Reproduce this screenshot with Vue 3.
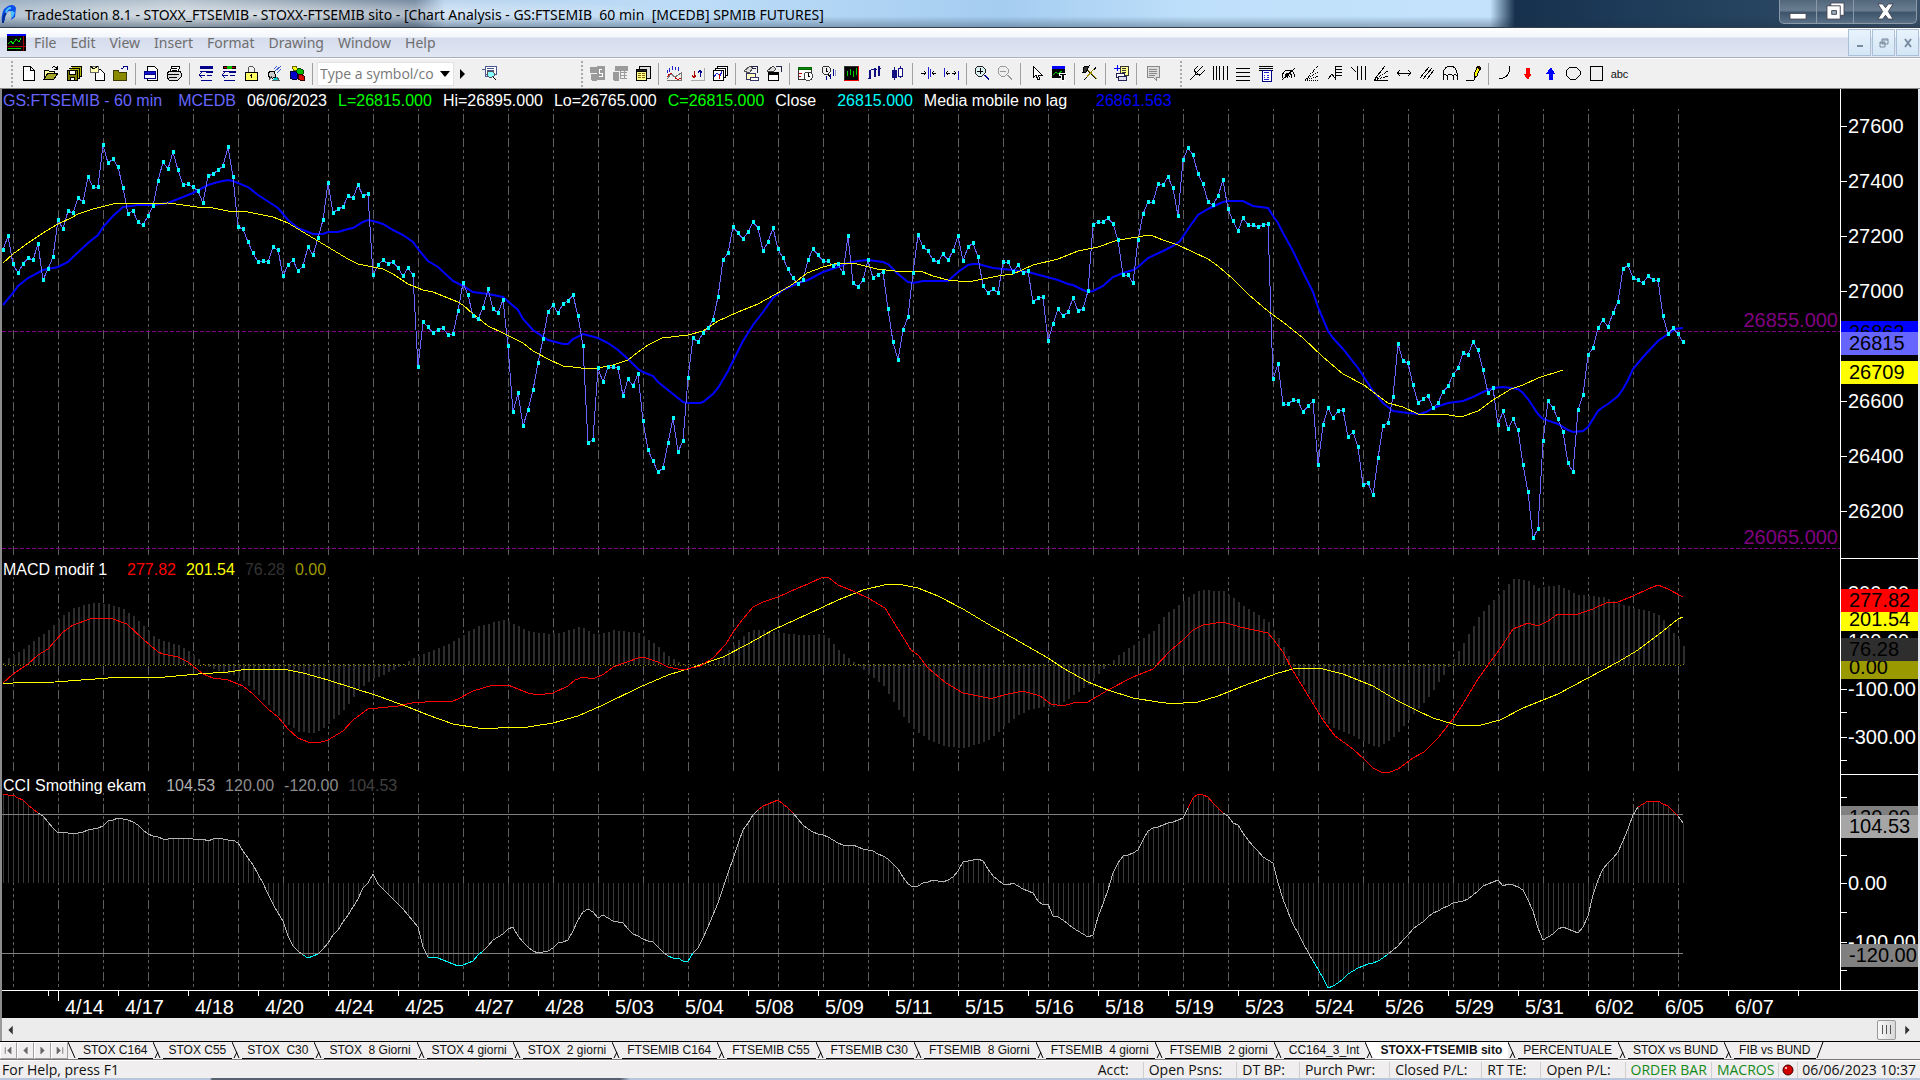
<script setup>
/* ---------- title, menu and toolbars ---------- */
const menus = ['File', 'Edit', 'View', 'Insert', 'Format', 'Drawing', 'Window', 'Help']

const K = '#000'
const N = '#00008b'
const G = '#9a9a9a'
// each icon: list of [path, fill, stroke]
const icons = {
  new: [['M3 1h7l4 4v10h-11zM10 1v4h4', '#fff', K]],
  open: [['M1 14V5h4l1 1h5v3', '#ffff9c', K], ['M1 14l4-6h10l-4 6z', '#a5a52a', K], ['M9 3q3-3 5 1M14 1v3h-3', 'none', K]],
  saveAll: [['M5 1h10v10h-2', '#b5b500', K], ['M3 3h10v10h-2', '#b5b500', K], ['M1 5h10v10h-10z', '#808000', K], ['M3 5h6v4h-6zM4 12h4v3h-4z', '#fff', K]],
  mailDoc: [['M6 4h5l4 4v7h-9z', '#fff', K], ['M1 1h8v6h-8z', '#ffffb0', '#666'], ['M1 1l4 3l4-3', 'none', K]],
  folder: [['M1 5h5l1 2h7v8h-13z', '#8a8a00', '#3a3a00'], ['M9 4l5-3M11 1h4v4', 'none', N]],
  preview: [['M4 1h7l3 3v11h-10z', '#fff', K], ['M1 6h11v7h-11z', '#fff', N], ['M1 6h11v3h-11z', '#1414c8', N]],
  print: [['M4 7l2-6h8l-2 6z', '#fff', K], ['M1 8l3-2h10l1 2v4l-3 3h-9l-2-3z', '#ddd', K], ['M1 9h12M3 12h8M6 3h5M6 5h5', 'none', K]],
  winBack: [['M3 1h12v2h-12z', N, N], ['M3 6h12M4 15h11M10 10h5M2 10h6M5 7l-3 3l3 3', 'none', N], ['M9 6h6v1h-6z', N, N]],
  winTool: [['M3 1h12v2h-12z', '#c00', K], ['M7 1h4v2h-4z', '#0b0', '#0b0'], ['M3 6h12M4 15h11M10 10h5M2 10h6M5 7l-3 3l3 3', 'none', N], ['M9 6h6v1h-6z', N, N]],
  lock: [['M5 8V3q3-4 6 0v5', 'none', '#555'], ['M2 7h12v8h-12z', '#ffff60', K], ['M8 9v4M7 10h2', 'none', K]],
  dish: [['M2 10q0-4 6-4l2 6q-5 3-8-2', '#ccc', K], ['M3 15l3-4M6 15h7l-2-3', '#0cc', '#555'], ['M9 6l6-5M11 8l4-4M8 4l3-3', 'none', '#3b5bd0']],
  blocks: [['M3 2l4-1l2 4l-4 1z', '#ff0', '#660'], ['M7 6l3-3l4 2v4l-4 2l-3-2z', '#0b0', '#040'], ['M1 7l5-1l2 2v6l-3 1l-4-2z', '#00c', '#003'], ['M9 10l3-1l3 2v4l-4 0l-2-1z', '#d00', '#300']],
  find: [['M4 1h11v8h-11z', '#fff', '#4a5a90'], ['M6 3h7M6 5h7M1 4h3v7h4', 'none', '#4a5a90'], ['M7 6h5l1 2v3l-2 1h-3l-2-2v-3z', '#8ff', '#555'], ['M12 12l3 3', 'none', K]],
  gray1: [['M1 2h6v5h-6zM8 1h7v13h-7z', G, G], ['M2 9h5v6h-4z', G, G], ['M13 4h-3v4h3v3h-3', 'none', '#fff']],
  gray2: [['M3 1h12v4h-12zM1 7h5v8h-4z', G, G], ['M8 7h7M8 10h7M8 13h7M8 5v9M12 5v9', 'none', G]],
  list: [['M4 1h11v12h-11z', '#ddd', K], ['M1 4h10v11h-10z', '#ffff90', K], ['M1 4h10v2h-10z', '#222', K], ['M3 8h3M3 10h3M3 12h3M7 8h3M7 10h3M7 12h3', 'none', '#886600']],
  curve: [['M1 5v3M3 3v4M6 1v4M9 2v3M12 2v4', 'none', '#2222cc'], ['M1 12q4-6 7-1t7 2', 'none', '#c00000'], ['M1 14l4-5l4 3l6-4M1 15h14V7', 'none', '#777']],
  updown: [['M5 6v7M3 10l2 3l2-3', 'none', '#b00000'], ['M11 12V5M9 8l2-3l2 3', 'none', N], ['M2 15h13V3', 'none', '#aaa']],
  windows: [['M5 1h10v9h-10z', '#fff', K], ['M3 3h10v9h-10z', '#fff', K], ['M1 5h10v10h-10z', '#fff', K], ['M2 12l3-4l3 3l2-5', 'none', '#2020d0'], ['M7 9v5', 'none', '#c00']],
  handWin: [['M3 8h9v6h-9z', '#ffffc0', '#336'], ['M7 12h8v3h-8z', '#fff', '#336'], ['M1 6l6-5l3 2l-4 5z', '#ddd', '#555'], ['M8 1h6v7M9 3h4', 'none', '#224']],
  handBox: [['M2 7h10v8h-10z', '#fff', K], ['M2 7h10v2h-10z', K, K], ['M1 6l6-5l3 3l-3 3z', '#ddd', '#444'], ['M10 1h5v6', 'none', '#224']],
  calendar: [['M1 3h13v11h-13z', '#fff', '#333'], ['M1 2h13v2h-13z', '#0a8a0a', '#060'], ['M2 8h3M2 11h2', 'none', '#c00'], ['M9 7h4l2 2v4l-2 2h-4l-2-2v-4z', '#fff', '#444'], ['M11 8v3h2', 'none', K]],
  clockBars: [['M4 1h4l2 2v4l-2 2h-4l-2-2v-4z', '#eee', '#333'], ['M6 3v3h2M8 9l2 3', 'none', K], ['M6 11v4M10 9v5M13 4v7', 'none', N], ['M15 5v6', 'none', '#99c']],
  blackChart: [['M1 1h14v14h-14z', K, '#333'], ['M15 1v14h-14', 'none', '#e00'], ['M4 6v5M7 4v6M10 6v6M13 3v7', 'none', '#0c0']],
  barsNavy: [['M3 5v9M2 13h2M8 3v9M8 4h-3M8 4h3M12 1v10M12 3h3', 'none', '#101080'], ['M4 5v9M9 3v9M13 1v10', 'none', '#101080']],
  candles: [['M5 2v13M11 1v12', 'none', '#101080'], ['M3 5h4v7h-4z', '#101080', '#101080'], ['M9 3h4v8h-4z', '#fff', '#101080']],
  narrow: [['M8 2v12M10 4v8', 'none', '#2020d0'], ['M1 8h5M4 6l2 2l-2 2M16 8h-4M14 6l-2 2l2 2', 'none', K]],
  widen: [['M1 3v9M15 6v9', 'none', '#2020d0'], ['M3 8h4M5 6l-2 2l2 2M9 8h4M11 6l2 2l-2 2', 'none', K]],
  zoomIn: [['M4 1h4l3 3v4l-3 3h-4l-3-3v-4z', '#d8f0f0', '#222'], ['M6 3v6M3 6h6', 'none', K], ['M10 10l5 5M11 10l4 4', 'none', N]],
  zoomOut: [['M4 1h4l3 3v4l-3 3h-4l-3-3v-4z', '#eee', G], ['M3 6h6M10 10l5 5M11 10l4 4', 'none', G]],
  pointer: [['M5 1v12l3-3l2 5l2-1l-2-4h4z', '#fff', K]],
  chartText: [['M1 1h12v11h-12z', K, K], ['M1 1h12v2h-12z', '#00f', '#00f'], ['M2 10l3-3l2 2l4-3', 'none', '#0c0'], ['M8 8h7v2h-2v5h-3v-5h-2z', K, '#fff']],
  hammer: [['M3 3l11 11', 'none', K], ['M4 3l11 11M13 3L3 14', 'none', '#a09000'], ['M2 2l5-1l-3 6h-3z', '#333', K], ['M14 2l-2 3M2 15l3-3', 'none', K]],
  addNote: [['M7 1h8v9h-8z', '#ffff90', '#333'], ['M9 3h4M9 5h4M9 7h4', 'none', '#333'], ['M4 0v6M1 3h6', 'none', '#00f'], ['M3 8h8v4h-8z', '#fff', '#225'], ['M5 11h8v4h-8z', '#dde', '#225']],
  note: [['M3 1h12v11h-3v3l-3-3h-6z', '#ddd', '#888'], ['M5 4h8M5 6h8M5 8h8M5 10h6', 'none', '#888']],
  fork: [['M1 15l6-6M7 9l-2-4M7 9l5 1M5 5l4-4M8 7l6-6M11 10l5-5M5 5l6 6', 'none', K]],
  vlines: [['M1 1v14M4 1v14M7 1v14M11 1v14M15 1v14', 'none', K]],
  hlines: [['M1 3h14M1 7h14M1 11h14M1 15h14', 'none', K]],
  calc: [['M1 1h14M1 3h14M1 5h14', 'none', K], ['M4 5h9v11h-9z', '#fff', N], ['M6 7h5M6 10h1M9 10h2M6 12h1M9 12h2M6 14h5', 'none', '#22c']],
  arcs: [['M1 13q0-8 7-8q5 1 6 7M4 13q0-5 4-5q3 1 3 5M1 15L14 3M6 13q1-4 3-1', 'none', K]],
  fanDots: [['M1 15h14M1 15L14 1', 'none', K, '1 1'], ['M1 15L15 6M1 15l14-4', 'none', K, '1 1']],
  retrace: [['M1 14l4-5l3 4V1M8 1h7M8 4h7M8 7h7M8 10h7', 'none', K]],
  timeLines: [['M1 2l5 5M7 1v14M11 1v14M15 1v14', 'none', K]],
  fan: [['M1 15L12 1M1 15h14', 'none', K], ['M1 15L15 6M1 15l14-4', 'none', K, '2 1']],
  hArrow: [['M1 8h14M4 5l-3 3l3 3M12 5l3 3l-3 3', 'none', K], ['M2 7v2M14 7v2', 'none', K]],
  channel: [['M1 13l9-11M4 14l9-11M8 14l7-9', 'none', K]],
  dome: [['M1 15V8q2-7 7-7q6 0 7 7v7M1 11q2-3 4 0q3-3 6 0q2-3 4 0M5 15v-4M11 15v-4', 'none', K]],
  pencil: [['M1 15h8l3-6', 'none', K], ['M9 10l3-8l3 1l-3 8l-3 2z', '#ff0', K], ['M12 2l1-1l2 1v2z', '#a00', K]],
  arc: [['M14 1q0 12-11 13', 'none', K]],
  down: [['M7 3h3v6h2l-3 5l-4-5h2z', '#f00', '#f00']],
  up: [['M7 14h3V8h2l-3-5l-4 5h2z', '#00f', '#00f']],
  circle: [['M5 2h6l4 4v4l-4 4h-6l-4-4v-4z', 'none', K]],
  square: [['M2 1h12v14h-12z', 'none', K]],
}
const bar1 = ['new', 'open', 'saveAll', 'mailDoc', 'folder', '|', 'preview', 'print', '|', 'winBack', 'winTool', 'lock', 'dish', 'blocks', '|']
const bar2 = ['gray1', 'gray2', 'list', '|', 'curve', 'updown', 'windows', '|', 'handWin', 'handBox', '|', 'calendar', 'clockBars', 'blackChart', 'barsNavy', 'candles', '|', 'narrow', 'widen', '|', 'zoomIn', 'zoomOut', '|', 'pointer', 'chartText', '|', 'hammer', '|', 'addNote', '|', 'note']
const bar3 = ['fork', 'vlines', 'hlines', 'calc', 'arcs', 'fanDots', 'retrace', 'timeLines', 'fan', 'hArrow', 'channel', 'dome', 'pencil', '|', 'arc', 'down', 'up', 'circle', 'square', 'abc']

/* ---------- chart data ---------- */
const COUNT = 337
const barX = i => 3 + 5 * i

// hourly closes, in thirds of a pixel below the top grid row
const closes = [
  390, 348, 432, 459, 432, 414, 420, 372, 480, 447, 411, 300, 327, 273, 279, 234, 246, 171, 201, 201,
  75, 129, 117, 141, 204, 282, 273, 306, 315, 288, 258, 183, 126, 147, 96, 150, 195, 192, 201, 213,
  249, 168, 162, 150, 138, 81, 171, 321, 327, 366, 399, 426, 423, 426, 381, 390, 468, 435, 420, 453,
  438, 381, 405, 354, 300, 189, 279, 267, 261, 228, 234, 195, 228, 222, 465, 435, 420, 432, 426, 444,
  468, 444, 465, 741, 606, 621, 639, 630, 624, 645, 642, 573, 489, 525, 588, 597, 564, 507, 567, 579,
  540, 678, 876, 819, 918, 870, 810, 729, 657, 576, 555, 579, 552, 543, 525, 588, 678, 969, 960, 744,
  786, 741, 741, 744, 828, 777, 798, 762, 903, 990, 1023, 1056, 1044, 969, 894, 996, 963, 774, 654, 666,
  639, 624, 600, 531, 420, 399, 321, 339, 357, 336, 306, 324, 393, 366, 324, 387, 414, 447, 474, 492,
  480, 420, 387, 405, 423, 423, 438, 432, 459, 348, 489, 501, 480, 420, 474, 465, 456, 567, 666, 720,
  629, 591, 459, 345, 381, 393, 420, 426, 402, 420, 393, 348, 423, 381, 369, 411, 498, 519, 507, 519,
  426, 426, 456, 435, 459, 453, 546, 534, 531, 663, 612, 567, 588, 576, 534, 573, 567, 513, 315, 306,
  306, 294, 312, 360, 465, 465, 489, 360, 282, 245, 245, 192, 195, 171, 204, 288, 120, 84, 105, 162,
  192, 246, 255, 228, 180, 267, 303, 333, 294, 315, 315, 321, 315, 312, 777, 732, 852, 852, 840, 843,
  876, 858, 843, 1035, 915, 864, 894, 873, 870, 951, 936, 981, 1095, 1089, 1125, 1014, 918, 909, 831, 672,
  723, 729, 795, 849, 837, 828, 864, 849, 816, 798, 765, 744, 699, 705, 666, 690, 750, 819, 804, 915,
  873, 927, 897, 930, 1035, 1116, 1254, 1227, 963, 843, 864, 897, 936, 1029, 1056, 870, 825, 705, 684, 624,
  600, 621, 579, 546, 447, 435, 474, 480, 489, 468, 480, 480, 588, 642, 624, 642, 666,
]
const closeY = closes.map(v => 120 + Math.round(v / 3))
const closeLine = closeY.map((y, i) => `${barX(i)},${y}`).join(' ')
const closeDots = closeY.map((y, i) => `M${barX(i) - 1} ${y - 2}h3v4h-3z`).join('')

const fastAverage = '3,305 13,293 18,286 28,278 43,270 58,267 68,262 73,257 88,243 98,235 103,227 113,216 123,207 138,205 153,205 168,203 178,199 193,193 208,185 218,182 228,180 233,181 248,187 258,195 278,208 288,220 298,228 313,234 323,234 328,232 338,232 348,229 353,228 363,222 368,220 373,221 383,224 393,230 403,235 413,242 418,249 428,261 438,267 453,281 463,286 473,292 488,294 503,297 518,310 523,319 533,330 548,340 563,344 568,344 573,339 583,334 598,338 608,343 618,350 628,359 638,369 643,372 653,376 658,382 673,394 683,402 688,403 700,403 703,402 713,394 718,388 728,371 733,361 743,341 753,325 763,312 773,298 783,290 798,283 808,280 823,272 838,267 848,263 858,261 868,260 883,262 888,264 898,274 908,282 913,283 923,281 948,281 958,272 968,265 973,264 978,264 993,268 1003,269 1013,270 1028,272 1043,276 1058,280 1068,284 1073,285 1083,290 1088,292 1093,291 1103,286 1113,277 1123,273 1133,270 1138,267 1148,258 1163,251 1173,246 1180,241 1188,229 1198,215 1208,209 1223,202 1228,201 1243,201 1253,206 1268,208 1273,216 1278,223 1283,233 1293,251 1303,272 1313,292 1318,307 1328,331 1333,338 1343,349 1358,368 1373,391 1383,403 1393,411 1408,413 1420,414 1426,412 1433,408 1448,403 1463,401 1473,397 1483,392 1493,388 1503,387 1518,389 1523,393 1528,399 1538,414 1543,419 1558,424 1568,430 1573,432 1583,431 1588,427 1593,419 1598,411 1603,407 1608,404 1618,396 1623,389 1628,380 1633,369 1643,357 1658,341 1668,334 1675,329 1683,328'
const slowAverage = '3,263 13,254 28,243 43,233 58,224 73,217 78,214 93,209 113,204 168,203 183,205 197,207 213,208 228,211 248,212 273,217 288,223 308,235 328,247 348,259 358,264 368,266 373,267 383,269 393,274 408,284 423,290 433,292 443,296 458,302 463,305 473,314 488,326 503,333 523,343 533,351 548,359 563,366 573,367 588,369 598,368 613,365 628,360 638,352 648,345 662,338 688,335 703,331 718,321 738,312 758,304 783,290 793,284 807,273 823,267 838,263 853,263 877,269 895,271 923,272 933,276 948,280 968,282 983,279 998,276 1013,274 1033,265 1058,259 1078,251 1098,247 1118,240 1138,237 1148,235 1153,236 1163,240 1178,245 1193,252 1208,259 1218,266 1233,279 1248,294 1263,307 1273,315 1283,322 1303,338 1323,357 1343,374 1364,385 1388,403 1403,407 1418,414 1433,415 1443,414 1455,416 1464,416 1478,411 1493,400 1511,389 1523,385 1538,378 1563,370'
const macdLine = '3,683 13,674 28,664 38,655 48,649 63,632 73,625 93,618 110,618 127,624 143,639 158,652 163,654 178,657 188,662 203,674 213,678 228,680 243,686 253,694 268,709 278,717 288,729 298,738 308,742 318,743 328,740 343,731 353,720 368,709 398,706 412,703 438,701 453,701 458,699 473,691 493,685 508,685 528,693 538,695 553,693 568,686 575,680 583,677 593,679 604,674 613,667 638,658 643,657 658,662 668,667 683,670 700,666 713,658 726,644 733,632 743,619 753,607 763,602 778,597 798,588 808,584 823,577 828,577 838,585 853,591 868,598 885,608 898,629 911,650 918,655 928,668 946,683 963,693 988,698 993,698 1008,694 1023,691 1040,696 1051,704 1063,706 1073,703 1088,702 1108,690 1133,677 1153,669 1171,650 1183,640 1193,630 1203,625 1223,622 1240,627 1268,633 1273,639 1283,652 1293,671 1309,697 1323,720 1335,736 1353,749 1364,759 1373,768 1381,772 1390,772 1398,769 1413,758 1424,752 1438,738 1453,719 1463,704 1478,679 1488,665 1500,649 1513,629 1528,623 1538,626 1548,621 1558,614 1578,614 1593,609 1608,602 1618,602 1633,596 1648,589 1658,585 1668,589 1683,597'
const signalLine = '3,684 13,683 55,682 108,678 118,677 165,677 198,674 228,672 248,669 283,669 303,673 328,680 353,688 378,696 408,707 428,715 453,724 478,728 498,728 528,727 553,723 578,716 603,705 640,687 668,675 691,668 723,657 748,644 773,630 808,614 838,600 863,590 888,584 898,584 918,588 938,596 963,609 993,627 1013,638 1048,658 1063,668 1088,682 1108,690 1133,698 1158,702 1173,704 1183,703 1198,702 1218,696 1243,686 1278,673 1293,669 1308,668 1323,669 1343,674 1373,686 1398,701 1418,711 1433,718 1456,725 1481,725 1500,720 1523,708 1558,694 1588,678 1618,662 1638,650 1658,635 1678,619 1683,617'
const histogram = '3,663 8,658 13,655 23,649 38,637 48,630 58,619 63,615 73,608 83,605 93,603 108,604 123,609 133,616 148,631 153,636 163,641 178,645 188,651 198,659 203,664 213,669 233,675 243,681 253,690 268,705 283,722 293,728 298,732 313,733 323,728 338,715 348,704 358,689 373,679 393,670 403,664 413,658 428,652 448,644 458,638 468,631 478,626 503,620 508,621 528,631 548,634 563,632 578,627 583,628 593,634 603,633 613,630 638,633 643,636 658,647 668,656 678,662 683,665 703,665 713,663 723,656 728,650 738,640 748,632 753,630 763,630 788,634 808,635 818,634 823,635 828,638 838,650 853,662 858,666 873,678 883,686 893,702 903,717 913,729 928,740 943,746 958,748 968,747 988,740 998,732 1003,727 1018,715 1028,710 1043,707 1053,707 1063,702 1073,695 1088,685 1093,679 1108,664 1118,655 1138,641 1153,631 1163,617 1168,612 1178,605 1188,597 1198,591 1203,590 1223,591 1233,598 1243,606 1258,615 1268,622 1278,638 1283,647 1288,656 1293,667 1303,685 1313,703 1323,720 1333,728 1353,736 1368,744 1378,747 1388,741 1398,732 1408,720 1428,697 1438,682 1448,667 1453,659 1463,643 1478,617 1488,605 1498,595 1513,579 1518,579 1528,581 1538,588 1548,586 1558,585 1578,595 1603,597 1618,603 1633,608 1648,611 1658,615 1663,620 1673,633 1678,639 1683,646'
const cci = '3,794 13,795 23,800 33,809 43,816 48,822 58,833 63,832 68,833 78,833 93,829 100,828 103,826 108,821 118,818 127,819 138,825 148,834 163,839 178,838 203,839 208,841 216,838 228,840 233,840 238,843 245,854 253,865 263,883 273,904 283,921 288,936 294,948 303,955 308,958 318,954 328,943 333,935 338,930 343,922 348,915 358,899 363,888 368,883 373,874 378,884 383,889 403,909 418,927 423,947 427,957 435,957 448,962 459,966 473,961 478,955 488,946 493,940 503,934 508,929 513,927 518,936 528,947 533,951 538,953 548,951 553,948 558,943 564,942 569,939 578,920 583,912 589,908 598,918 603,915 613,921 623,923 628,929 633,934 640,937 648,941 653,942 658,947 665,954 673,958 678,958 683,961 689,961 693,953 698,948 703,938 713,915 718,903 728,873 738,844 743,830 753,815 762,806 778,800 788,808 796,816 803,825 813,832 828,837 838,843 848,846 853,845 863,849 873,851 888,859 898,869 908,884 915,888 923,883 933,880 943,882 953,877 958,871 963,862 978,859 983,861 993,876 1003,884 1008,885 1013,883 1023,889 1033,893 1038,901 1043,905 1048,904 1053,916 1061,918 1071,927 1083,934 1089,937 1094,934 1098,917 1108,890 1113,873 1118,863 1123,856 1133,853 1138,850 1143,840 1149,829 1158,827 1183,818 1188,808 1193,798 1199,793 1208,797 1218,808 1224,814 1228,816 1233,823 1238,825 1248,840 1263,857 1273,863 1278,883 1283,899 1293,924 1309,954 1323,978 1328,988 1338,983 1348,974 1364,965 1373,963 1381,959 1388,954 1398,946 1413,929 1424,921 1433,913 1453,903 1461,902 1470,898 1483,886 1498,880 1503,886 1509,884 1518,887 1524,891 1533,911 1538,928 1543,940 1553,934 1558,929 1563,927 1573,931 1578,933 1583,927 1588,916 1593,895 1598,880 1603,869 1618,852 1623,841 1628,829 1633,815 1638,807 1648,801 1658,801 1668,806 1678,816 1683,823'

// value of a polyline at every bar
function sample(line) {
  const pts = line.split(' ').map(p => p.split(',').map(Number))
  let k = 0
  return Array.from({ length: COUNT }, (_, i) => {
    const x = barX(i)
    while (k < pts.length - 2 && pts[k + 1][0] < x) k++
    const [x0, y0] = pts[k]
    const [x1, y1] = pts[k + 1]
    return Math.round(y0 + ((y1 - y0) * (x - x0)) / (x1 - x0))
  })
}
const histBars = sample(histogram).map((y, i) => {
  const top = Math.min(y, 664)
  const h = Math.max(Math.abs(664 - y), 1)
  return `M${barX(i)} ${top}h2v${h}h-2z`
}).join('')

const cciY = sample(cci)
const cciBars = cciY.map((y, i) => `M${barX(i)} ${Math.min(y, 883)}h1v${Math.abs(883 - y)}h-1z`).join('')
const cciParts = { mid: '', high: '', low: '' }
for (let i = 0; i < COUNT - 1; i++) {
  const key = cciY[i] < 813 ? 'high' : cciY[i] > 954 ? 'low' : 'mid'
  cciParts[key] += `M${barX(i)} ${cciY[i]}L${barX(i + 1)} ${cciY[i + 1]}`
}

const gridXs = Array.from({ length: 38 }, (_, k) => 13 + 45 * k)
const grid = (top, bottom) => gridXs.map(x => `M${x} ${top}V${bottom}`).join('')

/* ---------- panes ---------- */
const panes = [
  {
    id: 'price', top: 89, height: 469,
    legend: [
      ['GS:FTSEMIB - 60 min', '#6666ff', 'wide'], ['MCEDB', '#6666ff'], ['06/06/2023', '#fff'], ['L=26815.000', '#0f0'],
      ['Hi=26895.000', '#fff'], ['Lo=26765.000', '#fff'], ['C=26815.000', '#0f0'], ['Close', '#fff', 'wider'],
      ['26815.000', '#0ff'], ['Media mobile no lag', '#fff', 'widest'], ['26861.563', '#00f'],
    ],
    ticks: [[126, '27600'], [181, '27400'], [236, '27200'], [291, '27000'], [401, '26600'], [456, '26400'], [511, '26200']],
    tags: [[321, '26862', '#0000ff'], [332, '26815', '#6666ff'], [361, '26709', '#ffff00']],
    levels: [[320, '26855.000'], [537, '26065.000']],
  },
  {
    id: 'macd', top: 558, height: 216,
    legend: [['MACD modif 1', '#fff', 'wider'], ['277.82', '#f00'], ['201.54', '#ff0'], ['76.28', '#333'], ['0.00', '#a09a00']],
    ticks: [[592, '300.00'], [640, '100.00'], [689, '-100.00'], [712, ''], [737, '-300.00'], [760, '']],
    tags: [[607, '201.54', '#ffff00'], [588, '277.82', '#ff0000'], [655, '0.00', '#9a9a00'], [637, '76.28', '#2e2e2e']],
    levels: [],
  },
  {
    id: 'cci', top: 774, height: 216,
    legend: [['CCI Smothing ekam', '#fff', 'wider'], ['104.53', '#b0b0b0'], ['120.00', '#8c8c8c'], ['-120.00', '#8c8c8c'], ['104.53', '#404040']],
    ticks: [[796, ''], [854, ''], [883, '0.00'], [912, ''], [942, '-100.00'], [970, '']],
    tags: [[805, '120.00', '#808080'], [814, '104.53', '#a6a6a6'], [944, '-120.00', '#808080']],
    levels: [],
  },
]
const pct = (y, pane) => ({ top: ((y - pane.top) / pane.height) * 100 + '%' })

const dates = ['4/17', '4/18', '4/20', '4/24', '4/25', '4/27', '4/28', '5/03', '5/04', '5/08', '5/09', '5/11', '5/15', '5/16', '5/18', '5/19', '5/23', '5/24', '5/26', '5/29', '5/31', '6/02', '6/05', '6/07']

/* ---------- workspace tabs and status ---------- */
const tabs = ['STOX C164', 'STOX C55', 'STOX  C30', 'STOX  8 Giorni', 'STOX 4 giorni', 'STOX  2 giorni', 'FTSEMIB C164', 'FTSEMIB C55', 'FTSEMIB C30', 'FTSEMIB  8 Giorni', 'FTSEMIB  4 giorni', 'FTSEMIB  2 giorni', 'CC164_3_Int', 'STOXX-FTSEMIB sito', 'PERCENTUALE', 'STOX vs BUND', 'FIB vs BUND']
const current = 'STOXX-FTSEMIB sito'
const navs = [['First', 'M4 4v8M11 4v8l-4-4z'], ['Previous', 'M10 4v8l-4-4z'], ['Next', 'M6 4v8l4-4z'], ['Last', 'M12 4v8M5 4v8l4-4z']]
const status = ['Acct:', 'Open Psns:', 'DT BP:', 'Purch Pwr:', 'Closed P/L:', 'RT TE:', 'Open P/L:']
</script>

<template>
  <div class="app">
    <header class="titlebar">
      <svg class="logo" viewBox="0 0 18 24" aria-hidden="true">
        <path d="M2 20Q0 7 8 3q6-3 8 2l-1 9l-4 3q3-9-2-9q-4 2-4 9z" fill="#0a50e8" />
        <path d="M6 10q1-5 5-5M12 8l0 6l2-5" fill="none" stroke="#49c0ff" stroke-width="2" />
        <path d="M3 20q0-7 3-10" fill="none" stroke="#052a90" stroke-width="2" />
      </svg>
      <h1>TradeStation 8.1 - STOXX_FTSEMIB - STOXX-FTSEMIB sito - [Chart Analysis - GS:FTSEMIB&nbsp; 60 min&nbsp; [MCEDB] SPMIB FUTURES]</h1>
      <div class="winbuttons">
        <button type="button" aria-label="Minimize">
          <svg viewBox="0 0 20 22"><path d="M1 13h17v6h-17z" fill="#fff" stroke="#445" /></svg>
        </button>
        <button type="button" aria-label="Restore">
          <svg viewBox="0 0 20 22"><path d="M5 2h14v13h-14z" fill="#fff" stroke="#445" /><path d="M1 5h14v14h-14z" fill="#fff" stroke="#445" /><path d="M6 10h5v4h-5z" fill="#9ab" stroke="#445" /></svg>
        </button>
        <button type="button" class="close" aria-label="Close">
          <svg viewBox="0 0 20 22"><path d="M2 3h5l3 4l3-4h5l-5 8l5 8h-5l-3-4l-3 4h-5l5-8z" fill="#fff" stroke="#445" /></svg>
        </button>
      </div>
    </header>

    <nav class="menubar">
      <svg class="docicon" viewBox="0 0 19 17" shape-rendering="crispEdges" aria-hidden="true">
        <path d="M0 0h19v17h-19z" fill="#000" /><path d="M0 0h19v2h-19z" fill="#00f" />
        <path d="M1 10l3-3l2 3l3-5l3 3l2-4M1 14l4 1l4-1l5 1" fill="none" stroke="#0d0" />
        <path d="M16 2v15M0 12h19" stroke="#900" />
      </svg>
      <button v-for="m in menus" :key="m" type="button" class="menu">{{ m }}</button>
      <div class="mdibuttons">
        <button type="button" aria-label="Minimize chart"><svg viewBox="0 0 16 16"><path d="M5 10h6v2h-6z" fill="#7a8aa0" /></svg></button>
        <button type="button" aria-label="Restore chart"><svg viewBox="0 0 16 16"><path d="M6 4h6v5h-6zM6 5h6M4 7h5v5h-5zM4 8h5" fill="none" stroke="#7a8aa0" /></svg></button>
        <button type="button" aria-label="Close chart"><svg viewBox="0 0 16 16"><path d="M5 4l6 8M11 4l-6 8" fill="none" stroke="#7a8aa0" stroke-width="2" /></svg></button>
      </div>
    </nav>

    <div class="toolbar">
      <div class="group first">
        <i class="grip"></i>
        <template v-for="(n, i) in bar1" :key="i">
          <i v-if="n === '|'" class="sep"></i>
          <button v-else type="button" class="tool" :aria-label="n">
            <svg viewBox="0 0 17 17"><path v-for="(p, j) in icons[n]" :key="j" :d="p[0]" :fill="p[1]" :stroke="p[2]" /></svg>
          </button>
        </template>
        <div class="combo">
          <input type="text" aria-label="Symbol" placeholder="Type a symbol/co" />
          <button type="button" aria-label="Recent symbols"><svg viewBox="0 0 16 16"><path d="M3 5h10l-5 6z" /></svg></button>
        </div>
        <button type="button" class="go" aria-label="Go"><svg viewBox="0 0 16 16"><path d="M6 3v10l5-5z" /></svg></button>
        <button type="button" class="tool find" aria-label="find">
          <svg viewBox="0 0 17 17"><path v-for="(p, j) in icons.find" :key="j" :d="p[0]" :fill="p[1]" :stroke="p[2]" /></svg>
        </button>
      </div>
      <div v-for="(bar, b) in [bar2, bar3]" :key="b" class="group" :class="b ? 'third' : 'second'">
        <i class="grip"></i>
        <template v-for="(n, i) in bar" :key="i">
          <i v-if="n === '|'" class="sep"></i>
          <button v-else-if="n === 'abc'" type="button" class="tool abc">abc</button>
          <button v-else type="button" class="tool" :aria-label="n">
            <svg viewBox="0 0 17 17"><path v-for="(p, j) in icons[n]" :key="j" :d="p[0]" :fill="p[1]" :stroke="p[2]" :stroke-dasharray="p[3]" /></svg>
          </button>
        </template>
      </div>
    </div>

    <main class="chart">
      <section v-for="p in panes" :key="p.id" class="pane" :class="p.id">
        <div class="plot">
          <svg class="drawing" :viewBox="`2 ${p.top} 1838 ${p.height}`" preserveAspectRatio="none" shape-rendering="crispEdges" fill="none">
            <template v-if="p.id === 'price'">
              <path class="grid" :d="grid(109, 555)" stroke-dashoffset="19" />
              <path class="level" d="M2 331H1840M2 548H1840" />
              <polyline :points="fastAverage" stroke="#0000ff" stroke-width="2" shape-rendering="auto" />
              <polyline :points="closeLine" stroke="#6666ff" />
              <polyline :points="slowAverage" stroke="#ffff00" />
              <path :d="closeDots" fill="#00ffff" />
            </template>
            <template v-else-if="p.id === 'macd'">
              <path class="grid" :d="grid(577, 771)" stroke-dashoffset="7" />
              <path :d="histBars" fill="#2e2e2e" />
              <path d="M3 664H1685" stroke="#a09a00" stroke-dasharray="1 4" />
              <path d="M5 665H1685" stroke="#a09a00" stroke-dasharray="1 4" />
              <polyline :points="signalLine" stroke="#ffff00" />
              <polyline :points="macdLine" stroke="#ff0000" />
            </template>
            <template v-else>
              <path class="grid" :d="grid(793, 987)" stroke-dashoffset="13" />
              <path :d="cciBars" fill="#3a3a3a" />
              <path d="M2 814H1683M2 953H1683" stroke="#808080" />
              <path :d="cciParts.mid" stroke="#b4b4b4" />
              <path :d="cciParts.high" stroke="#ff0000" />
              <path :d="cciParts.low" stroke="#00ffff" />
            </template>
          </svg>
          <p class="legend">
            <span v-for="(l, i) in p.legend" :key="i" :class="l[2]" :style="{ color: l[1] }">{{ l[0] }}</span>
          </p>
          <span v-for="l in p.levels" :key="l[1]" class="levelname" :style="pct(l[0], p)">{{ l[1] }}</span>
        </div>
        <div class="scale">
          <span v-for="t in p.ticks" :key="t[0]" class="tick" :style="pct(t[0], p)">{{ t[1] }}</span>
          <span v-for="t in p.tags" :key="t[0]" class="tag" :style="{ ...pct(t[0], p), background: t[2] }">{{ t[1] }}</span>
        </div>
      </section>
      <div class="dates">
        <span class="lead"></span><span class="stub"></span><span class="firstdate">4/14</span>
        <span v-for="d in dates" :key="d" class="date">{{ d }}</span>
        <span class="tail"></span>
      </div>
    </main>

    <div class="scrollbar">
      <button type="button" aria-label="Scroll left"><svg viewBox="0 0 16 16"><path d="M10 3v10l-5-5z" /></svg></button>
      <i class="thumb"></i>
      <button type="button" aria-label="Scroll right"><svg viewBox="0 0 16 16"><path d="M6 3v10l5-5z" /></svg></button>
    </div>

    <div class="tabs">
      <button v-for="n in navs" :key="n[0]" type="button" class="nav" :aria-label="n[0]">
        <svg viewBox="0 0 16 16"><path :d="n[1]" fill="#666" stroke="#666" /></svg>
      </button>
      <template v-for="(t, i) in tabs" :key="t">
        <svg class="slant" viewBox="0 0 10 16" aria-hidden="true">
          <path d="M0 0H10V16H7Z" :fill="t === current ? '#fff' : '#f0eeee'" />
          <path d="M0 0L7 16" fill="none" stroke="#000" />
          <path v-if="i" d="M5 10L2 16" fill="none" stroke="#000" />
        </svg>
        <button type="button" class="tab" :class="{ current: t === current }">{{ t }}</button>
      </template>
      <svg class="slant" viewBox="0 0 10 16" aria-hidden="true"><path d="M7 0L1 16" fill="none" stroke="#000" /></svg>
    </div>

    <footer class="statusbar">
      <span class="help">For Help, press F1</span>
      <span v-for="s in status" :key="s" class="cell">{{ s }}</span>
      <span class="cell green">ORDER BAR</span>
      <span class="cell green">MACROS</span>
      <span class="cell lamp"><svg viewBox="0 0 12 14"><circle cx="6" cy="7" r="5" fill="#d00000" stroke="#400" /><circle cx="4" cy="5" r="1" fill="#fff" /></svg></span>
      <time class="cell clock">06/06/2023 10:37</time>
    </footer>
    <div class="taskedge"></div>
  </div>
</template>

<style>
body { margin: 0; background: #f0eeee; }
</style>

<style scoped>
.app { display: flex; flex-direction: column; min-height: 100vh; font: 14px/16px "Open Sans", "Noto Sans", sans-serif; color: #111; background: #f0eeee; overflow: hidden; }
button { border: 0; padding: 0; margin: 0; background: none; font: inherit; color: inherit; }
svg { display: block; }

.titlebar {
  display: flex; height: 28px; position: relative;
  background:
    linear-gradient(180deg, transparent 60%, rgba(30, 50, 70, .35) 100%),
    radial-gradient(ellipse 440px 16px at 280px 14px, rgba(255, 255, 255, .6), rgba(255, 255, 255, 0)),
    linear-gradient(90deg, #9fb2c4 0, #b4c2cd 180px, #8496a8 340px, #71869e 415px, #b9d4ee 445px, #bcdcf8 700px, #a5cdf0 1000px, #bfe0fb 1200px, #c4e2fb 1490px, #16304d 1515px, #1d3a58 1620px, #25425f 1740px, #3a5168 100%);
  border-bottom: 1px solid #35404c; box-sizing: border-box;
}
.logo { width: 18px; height: 24px; margin-top: 3px; }
h1 { margin: 0 0 0 7px; font: 14px/29px "Noto Sans", "Open Sans", sans-serif; color: #000; white-space: nowrap; }
.winbuttons { display: flex; margin-left: auto; margin-right: 3px; height: 24px; border: 1px solid #8a99a8; border-top: 0; border-radius: 0 0 5px 5px; background: linear-gradient(#52677c, #6a7d90 45%, #3d546b 55%, #5b7187); box-sizing: border-box; }
.winbuttons button { width: 37px; display: grid; place-items: center; border-right: 1px solid #8a99a8; }
.winbuttons .close { width: 62px; border-right: 0; }
.winbuttons svg { width: 19px; height: 21px; }

.menubar { display: flex; align-items: center; height: 30px; box-sizing: border-box; background: linear-gradient(#fff 0, #f2f5fb 9px, #d5dcec 10px, #e1e7f4 100%); border-bottom: 1px solid #a9b0ba; }
.docicon { width: 19px; height: 17px; margin: 0 1px 0 7px; }
.menu { padding: 0 7px; font-family: "Noto Sans", "Open Sans", sans-serif; line-height: 28px; color: #6e6e6e; }
.mdibuttons { display: flex; margin-left: auto; gap: 1px; padding-right: 1px; }
.mdibuttons button { width: 23px; height: 27px; display: grid; place-items: center; border: 1px solid #a9c0d8; background: linear-gradient(#e8f3fc, #d4e6f6); box-sizing: border-box; }
.mdibuttons svg { width: 16px; height: 16px; }

.toolbar { display: flex; align-items: center; height: 31px; box-sizing: border-box; background: #f0f0f0; border-top: 1px solid #fff; border-bottom: 1px solid #8a8a8a; }
.group { display: flex; align-items: center; flex: none; }
.first { width: 570px; }
.first .grip { margin-left: 11px; }
.second .grip { margin-left: 11px; margin-right: 3px; }
.third .grip { margin-left: 16px; margin-right: 4px; }
.grip { width: 2px; height: 26px; margin-right: 4px; background: repeating-linear-gradient(#aaa 0 2px, transparent 2px 4px); }
.sep { width: 1px; height: 22px; margin: 0 4px 0 3px; background: #a0a0a0; }
.tool { width: 23px; height: 24px; display: grid; place-items: center; }
.tool svg { width: 17px; height: 17px; shape-rendering: crispEdges; }
.abc { font: 11px/16px "Liberation Sans", Arial, sans-serif; }
.combo { display: flex; width: 137px; height: 24px; background: #fff; border: 1px solid #e2e2e2; box-sizing: border-box; }
.combo input { flex: 1; min-width: 0; border: 0; padding: 0 2px; font: inherit; background: none; outline: 0; }
.combo input::placeholder { color: #777; opacity: 1; }
.combo button svg, .go svg { width: 16px; height: 16px; }
.go { width: 18px; }
.find { margin-left: 6px; }

.chart { flex: 1; display: grid; grid-template-rows: 469fr 216fr 216fr 28px; background: #000; border-left: 2px solid #8c8c8c; border-right: 2px solid #dfe6ee; font: 20px/22px "Liberation Sans", Arial, sans-serif; }
.pane { display: grid; grid-template-columns: 1fr 78px; min-height: 0; }
.plot, .scale { position: relative; overflow: hidden; }
.drawing { position: absolute; inset: 0; width: 100%; height: 100%; }
.grid { stroke: #5c5c5c; stroke-dasharray: 9 3 3 3 3 3; }
.level { stroke: #800080; stroke-dasharray: 4 2; }
.legend { position: relative; display: flex; gap: 11px; margin: 0; padding-left: 1px; font-size: 16px; line-height: 23px; white-space: nowrap; }
.macd .legend, .cci .legend { gap: 10px; }
.wide { margin-right: 5px; }
.wider { margin-right: 10px; }
.widest { margin-right: 18px; }
.levelname { position: absolute; right: 2px; transform: translateY(-50%); color: #800080; }
.scale { border-left: 1px solid #fff; }
.macd .scale, .cci .scale { border-top: 1px solid #fff; }
.tick { position: absolute; left: 0; padding-left: 7px; height: 22px; margin-top: -11px; color: #fff; background: linear-gradient(#fff, #fff) 0 11px / 6px 1px no-repeat; white-space: nowrap; }
.tag { position: absolute; left: 0; right: 0; height: 23px; line-height: 23px; padding-left: 8px; color: #000; }
.dates { display: flex; border-top: 1px solid #fff; color: #fff; line-height: 33px; height: 28px; box-sizing: border-box; overflow: hidden; }
.dates span { flex: 70 1 0; min-width: 0; text-indent: 7px; white-space: nowrap; background: linear-gradient(#fff, #fff) 0 0 / 1px 5px no-repeat; }
.dates .lead { flex-grow: 46; background: none; }
.dates .stub { flex-grow: 10; }
.dates .firstdate { flex-grow: 60; background-size: 1px 10px; }
.dates .tail { flex-grow: 120; }

.scrollbar { display: flex; align-items: center; height: 23px; padding: 0 6px 0 2px; background: #ececec; border-left: 2px solid #9a9a9a; box-sizing: border-box; }
.scrollbar svg { width: 14px; height: 14px; fill: #333; }
.scrollbar .thumb { margin-left: auto; margin-right: 4px; width: 17px; height: 18px; border: 1px solid #999; border-radius: 2px; background: repeating-linear-gradient(90deg, #555 0 1px, transparent 1px 4px) 4px 4px / 9px 9px no-repeat, linear-gradient(90deg, #f8f8f8, #d8d8d8); }

.tabs { display: flex; height: 17px; border-top: 1px solid #000; border-bottom: 1px solid #777; background: #f0eeee; font: 12px/15px "Liberation Sans", Arial, sans-serif; }
.nav { width: 17px; border: 1px solid #a0a0a0; border-top-color: #fff; border-left-color: #fff; box-sizing: border-box; display: grid; place-items: center; }
.nav svg { width: 13px; height: 13px; }
.slant { width: 10px; height: 16px; flex: none; }
.tab { padding: 0 6px 0 5px; white-space: pre; border-bottom: 1px solid #000; box-sizing: border-box; height: 17px; }
.tab.current { font-weight: 700; background: #fff; border-bottom: 0; }

.statusbar { display: flex; align-items: center; height: 18px; border-top: 1px solid #fff; box-sizing: border-box; white-space: nowrap; }
.help { padding-left: 2px; margin-right: auto; }
.cell { padding: 0 14px 0 5px; border-left: 1px solid #d0cece; }
.help + .cell { border-left: 0; }
.green { color: #14891a; padding: 0 4px 0 5px; }
.lamp { padding: 0 3px; }
.lamp svg { width: 12px; height: 14px; }
.clock { padding: 0 4px; }
.taskedge { height: 2px; background: linear-gradient(90deg, #b8c6de 0 210px, #56606e 212px 620px, #b8c6de 630px); }
</style>
